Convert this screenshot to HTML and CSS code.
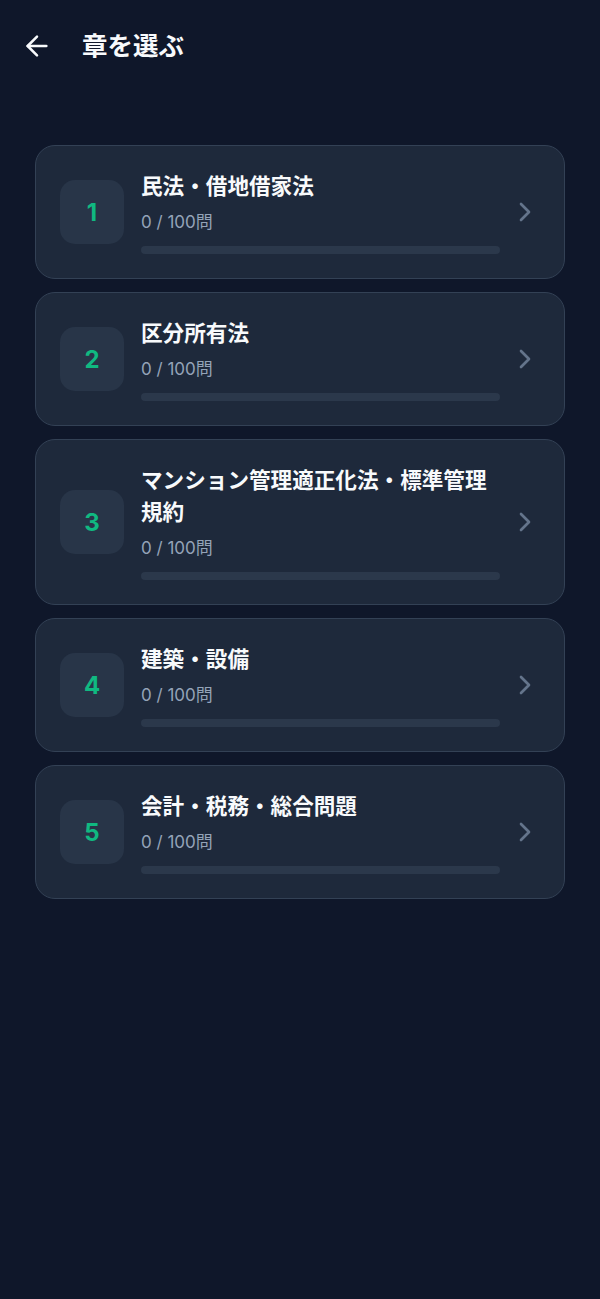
FILE: index.html
```html
<!DOCTYPE html>
<html lang="ja">
<head>
<meta charset="utf-8">
<title>章を選ぶ</title>
<link rel="stylesheet" href="styles.css">
</head>
<body>
<header class="top">
  <svg class="back" viewBox="0 0 24 24" fill="none" stroke="currentColor" stroke-width="2" stroke-linecap="round" stroke-linejoin="round"><path d="m12 19-7-7 7-7"/><path d="M19 12H5"/></svg>
  <h1 class="page-title">章を選ぶ</h1>
</header>
<main class="list">
  <div class="card">
    <div class="num">1</div>
    <div class="info">
      <div class="title">民法・借地借家法</div>
      <div class="count">0 / 100問</div>
      <div class="bar"></div>
    </div>
    <svg class="chev" viewBox="0 0 24 24" fill="none" stroke="currentColor" stroke-width="2" stroke-linecap="round" stroke-linejoin="round"><path d="m9 18 6-6-6-6"/></svg>
  </div>
  <div class="card">
    <div class="num">2</div>
    <div class="info">
      <div class="title">区分所有法</div>
      <div class="count">0 / 100問</div>
      <div class="bar"></div>
    </div>
    <svg class="chev" viewBox="0 0 24 24" fill="none" stroke="currentColor" stroke-width="2" stroke-linecap="round" stroke-linejoin="round"><path d="m9 18 6-6-6-6"/></svg>
  </div>
  <div class="card">
    <div class="num">3</div>
    <div class="info">
      <div class="title">マンション管理適正化法・標準管理規約</div>
      <div class="count">0 / 100問</div>
      <div class="bar"></div>
    </div>
    <svg class="chev" viewBox="0 0 24 24" fill="none" stroke="currentColor" stroke-width="2" stroke-linecap="round" stroke-linejoin="round"><path d="m9 18 6-6-6-6"/></svg>
  </div>
  <div class="card">
    <div class="num">4</div>
    <div class="info">
      <div class="title">建築・設備</div>
      <div class="count">0 / 100問</div>
      <div class="bar"></div>
    </div>
    <svg class="chev" viewBox="0 0 24 24" fill="none" stroke="currentColor" stroke-width="2" stroke-linecap="round" stroke-linejoin="round"><path d="m9 18 6-6-6-6"/></svg>
  </div>
  <div class="card">
    <div class="num">5</div>
    <div class="info">
      <div class="title">会計・税務・総合問題</div>
      <div class="count">0 / 100問</div>
      <div class="bar"></div>
    </div>
    <svg class="chev" viewBox="0 0 24 24" fill="none" stroke="currentColor" stroke-width="2" stroke-linecap="round" stroke-linejoin="round"><path d="m9 18 6-6-6-6"/></svg>
  </div>
</main>
</body>
</html>
```

FILE: styles.css
```css
html, body {
  margin: 0;
  padding: 0;
  background: #0f172a;
  min-height: 100%;
}
body {
  font-family: Inter, "Noto Sans CJK JP", sans-serif;
  color: #f8fafc;
}
.top {
  height: 92px;
  display: flex;
  align-items: center;
  padding-left: 21px;
  box-sizing: border-box;
}
.back {
  width: 32px;
  height: 32px;
  color: #f8fafc;
  stroke-width: 1.9;
  flex: none;
}
.page-title {
  margin: 0 0 0 29px;
  font-size: 25.5px;
  font-weight: 700;
  line-height: 32px;
  letter-spacing: 0;
}
.list {
  margin-top: 53px;
  padding: 0 35px;
  display: flex;
  flex-direction: column;
  gap: 13px;
}
.card {
  display: flex;
  align-items: center;
  background: #1e293b;
  border: 1px solid #334155;
  border-radius: 20px;
  padding: 24px 23px 24px 24px;
}
.num {
  flex: none;
  width: 64px;
  height: 64px;
  border-radius: 15px;
  background: #283548;
  color: #10b981;
  font-size: 24px;
  font-weight: 700;
  display: flex;
  align-items: center;
  justify-content: center;
  margin-right: 17px;
}
.info {
  flex: 1;
  min-width: 0;
}
.title {
  font-size: 21.6px;
  font-weight: 700;
  line-height: 32px;
  color: #f8fafc;
}
.count {
  margin-top: 8px;
  font-size: 17px;
  line-height: 24px;
  color: #94a3b8;
}
.bar {
  margin-top: 12px;
  height: 8px;
  border-radius: 4px;
  background: #2b384b;
}
.chev {
  flex: none;
  width: 32px;
  height: 32px;
  margin-left: 9px;
  color: #64748b;
}
```
